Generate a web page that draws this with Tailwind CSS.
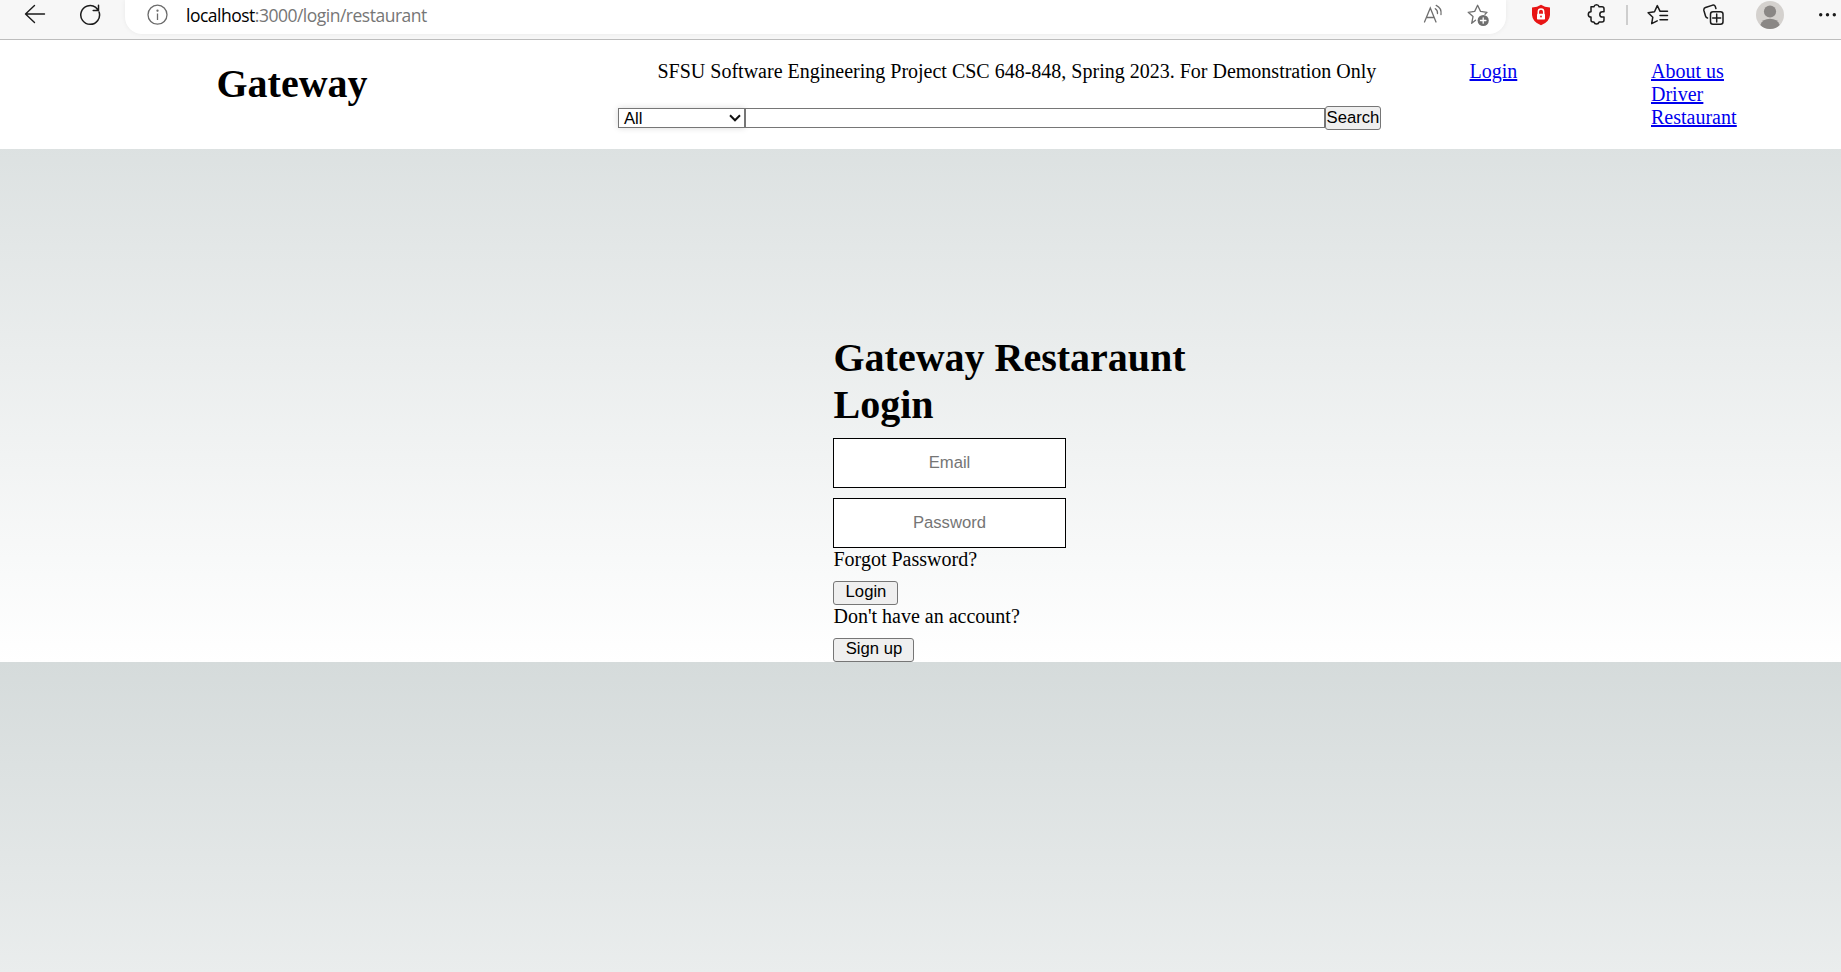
<!DOCTYPE html>
<html lang="en">
<head>
<meta charset="utf-8">
<title>Gateway</title>
<script src="https://cdn.jsdelivr.net/npm/@tailwindcss/browser@4"></script>
</head>
<body class="h-[972px] overflow-hidden bg-white font-['Liberation_Serif',serif] text-[20px] leading-[23px] text-black">
<div class="flex h-10 items-start border-b border-[#bdbdbd] bg-[#f7f7f7]">
  <svg class="ml-6 mt-1 h-[22px] w-[22px] shrink-0" viewBox="0 0 22 22" fill="none" stroke="#1b1b1b" stroke-width="1.4" stroke-linecap="round" stroke-linejoin="round"><path d="M20.5 10H1.5M10.500 1.500L1.500 10l9 8.500"/></svg>
  <svg class="ml-[33px] mt-1 h-[22px] w-[22px] shrink-0" viewBox="0 0 22 22" fill="none" stroke="#1b1b1b" stroke-width="1.5" stroke-linecap="round" stroke-linejoin="round"><path d="M20.100 8A9.400 9.400 0 1 1 16.800 3.400L19.300 6.300M19.500 1.200V6.500H14.200"/></svg>
  <div class="ml-6 flex h-[34px] w-[1381px] shrink-0 rounded-b-[17px] bg-white shadow-[0_0_5px_rgba(0,0,0,0.06)]">
    <svg class="ml-[22px] mt-1 h-[22px] w-[22px] shrink-0" viewBox="0 0 22 22" fill="none" stroke="#6b6b6b" stroke-width="1.3"><circle cx="10.500" cy="10.700" r="9.500"/><path d="M10.500 9.500V16"/><circle cx="10.500" cy="6.700" r=".5" fill="#6b6b6b"/></svg>
    <div class="ml-[17px] mt-[3px] w-[600px] whitespace-nowrap font-['Open_Sans',sans-serif] text-[17.5px] leading-6 tracking-[-0.5px] text-[#767676]"><span class="text-black">localhost</span>:3000/login/restaurant</div>
    <svg class="ml-[637px] mt-[3px] h-[22px] w-[22px] shrink-0" viewBox="0 0 22 22" fill="none" stroke="#6f6f6f" stroke-width="1.300" stroke-linecap="round"><path d="M1.500 19L7.300 5 13 19M3.500 14.500H11M12.300 5.700Q14.800 7.500 14.500 10.500M13.200 2.400Q18.800 5 18 11.500"/></svg>
    <svg class="ml-[22px] mt-[3px] h-6 w-6 shrink-0" viewBox="0 0 24 24" fill="none" stroke="#6f6f6f" stroke-width="1.300" stroke-linejoin="round" stroke-linecap="round"><path d="M8.500 17.200L4.700 20.300 6 13.600 1.200 9.300 7.700 8.400 10.600 2.300 13.500 8.400 20 9.300 18 11.300"/><circle cx="16.200" cy="17.500" r="5.600" fill="#6f6f6f" stroke="none"/><path stroke="#fff" d="M16.200 14.800v5.400M13.500 17.500h5.400"/></svg>
  </div>
  <svg class="ml-[25px] mt-1 h-[22px] w-5 shrink-0" viewBox="0 0 20 22"><path fill="#e81515" d="M10 .700Q13.500 3.300 19 3.500V11Q18.500 18 10 21.300 1.500 18 1 11V3.500Q6.500 3.300 10 .700Z"/><path d="M7.300 10V7.800a2.700 2.700 0 0 1 5.400 0V10" fill="none" stroke="#fff" stroke-width="1.500"/><rect x="6" y="9.700" width="8" height="5.800" rx=".7" fill="#fff"/><circle cx="10" cy="12.500" r=".9" fill="#e81515"/></svg>
  <svg class="ml-[35px] mt-1 h-[22px] w-[22px] shrink-0" viewBox="0 0 22 22" fill="none" stroke="#1b1b1b" stroke-width="1.500" stroke-linejoin="round"><path d="M5 2.800H7.900A2.700 2.700 0 0 1 13.100 2.800H16Q18 2.800 18 4.800V7.700H16.500A2.700 2.700 0 0 0 16.500 13.100H18V16Q18 18 16 18H13.100A2.700 2.700 0 0 1 7.900 18H7Q5 18 5 16V13.100A2.700 2.700 0 0 1 5 7.700Z"/></svg>
  <div class="ml-[18px] mt-[5px] h-5 w-0.5 shrink-0 bg-[#cecece]"></div>
  <svg class="ml-[19px] mt-1 h-[22px] w-[22px] shrink-0" viewBox="0 0 22 22" fill="none" stroke="#1b1b1b" stroke-width="1.500" stroke-linejoin="round" stroke-linecap="round"><path d="M10.200 16.900L4.700 19.700 5.800 13.200 1.100 8.700 7.500 7.700 10.300 1.600 13.100 7.300M13.100 7.300H20.500M13 11.500h7.500M13 15.700h7.500"/></svg>
  <svg class="ml-[34px] mt-1 h-[22px] w-[22px] shrink-0" viewBox="0 0 22 22" fill="none" stroke="#1b1b1b" stroke-width="1.500" stroke-linejoin="round" stroke-linecap="round"><rect x="7.500" y="7.700" width="12.500" height="12.500" rx="2.500"/><path d="M13.700 10v8M9.700 14h8M4.500 14Q3 13.700 2.500 12L.9 6.500Q.5 4.200 2.500 3.500L9.800 1.100Q11.500 .700 12.200 2.300L12.900 4.500"/></svg>
  <svg class="ml-[31px] mt-px h-7 w-7 shrink-0" viewBox="0 0 28 28"><circle cx="14" cy="14" r="14" fill="#d4d1ce"/><circle cx="14" cy="10.500" r="6.100" fill="#8a8785"/><path d="M4.300 24Q6.500 17.800 14 17.800T23.700 24Q20 28 14 28T4.300 24Z" fill="#8a8785"/></svg>
  <svg class="ml-[35px] mt-3 h-1.5 w-[18px] shrink-0" viewBox="0 0 18 6" fill="#1b1b1b"><circle cx="1.700" cy="2.800" r="1.700"/><circle cx="8.500" cy="2.800" r="1.700"/><circle cx="15.300" cy="2.800" r="1.700"/></svg>
</div>
<div class="h-[932px] bg-[linear-gradient(#d5dbdb,#ffffff)] bg-[length:100%_622px] bg-repeat-y">
  <header class="flex h-[109px] items-start bg-white pt-5">
    <h1 class="ml-[216.5px] mt-px w-[401.5px] text-[40px] font-bold leading-[46px]">Gateway</h1>
    <div class="w-[763px]">
      <p class="ml-[39.5px] whitespace-nowrap">SFSU Software Engineering Project CSC 648-848, Spring 2023. For Demonstration Only</p>
      <div class="mt-[23px] flex h-6 items-center font-['Liberation_Sans',sans-serif] text-[16.67px]">
        <div class="flex h-5 w-[127px] shrink-0 items-center justify-between border border-[#767676] bg-white pl-[5px] pr-[3px] shadow-[0_0_6px_rgba(0,0,0,0.15)]"><span class="relative top-px leading-[18px]">All</span><svg class="h-3 w-3" viewBox="0 0 12 12" fill="none" stroke="#111" stroke-width="2"><path d="M1 3.300l5 5 5-5"/></svg></div>
        <input aria-label="Search text" class="h-5 w-[580px] shrink-0 border border-[#767676] bg-white">
        <button class="h-6 w-14 shrink-0 whitespace-nowrap rounded-[3px] border border-[#767676] bg-[#efefef] pb-px text-center leading-[20px]">Search</button>
      </div>
    </div>
    <a class="ml-[88.5px] w-[181.500px] text-[#0000ee]"><span class="underline decoration-2">Login</span></a>
    <nav class="flex flex-col text-[#0000ee] underline decoration-2"><a>About us</a><a>Driver</a><a>Restaurant</a></nav>
  </header>
  <main class="ml-[833px] flex w-[375px] flex-col items-start pt-[185px]">
    <h1 class="pl-[0.5px] text-[40px] font-bold leading-[47px]">Gateway Restaraunt Login</h1>
    <input placeholder="Email" class="mt-2.5 h-[50px] w-[233px] border border-black bg-white text-center font-['Liberation_Sans',sans-serif] text-[16.67px] placeholder:text-[#757575]">
    <input placeholder="Password" class="mt-2.5 h-[50px] w-[233px] border border-black bg-white text-center font-['Liberation_Sans',sans-serif] text-[16.67px] placeholder:text-[#757575]">
    <p class="pl-[0.5px]">Forgot Password?</p>
    <button class="mt-2.5 h-6 w-[65px] rounded-[3px] border border-[#767676] bg-[#efefef] pb-0.5 pl-px text-center font-['Liberation_Sans',sans-serif] text-[16.67px] leading-[20px]">Login</button>
    <p class="pl-[0.5px]">Don't have an account?</p>
    <button class="mt-2.5 h-6 w-[81px] rounded-[3px] border border-[#767676] bg-[#efefef] pb-0.5 pl-px text-center font-['Liberation_Sans',sans-serif] text-[16.67px] leading-[20px]">Sign up</button>
  </main>
</div>
</body>
</html>
